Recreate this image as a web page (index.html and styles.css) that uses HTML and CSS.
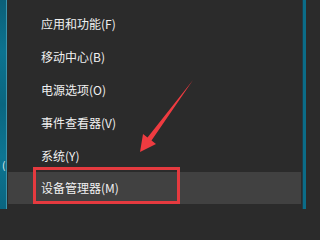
FILE: index.html
```html
<!DOCTYPE html>
<html lang="zh-CN">
<head>
<meta charset="utf-8">
<link rel="stylesheet" href="styles.css">
</head>
<body>
<div class="screen">
  <div class="desk-left"><span class="paren">(</span></div>
  <div class="menu">
    <div class="item">应用和功能(F)</div>
    <div class="item">移动中心(B)</div>
    <div class="item">电源选项(O)</div>
    <div class="item">事件查看器(V)</div>
    <div class="item">系统(Y)</div>
    <div class="item active">设备管理器(M)</div>
  </div>
  <div class="desk-right"></div>
  <div class="mark-box"></div>
  <svg class="arrow" width="306" height="209" viewBox="0 0 306 209">
    <polygon points="140,152 156,144 151.5,140.6 193,80 147.5,137.6 143,134" fill="#ee3b40"/>
  </svg>
</div>
</body>
</html>
```

FILE: styles.css
```css
html, body {
  margin: 0;
  padding: 0;
  background: #2b2b2b;
}
.screen {
  position: relative;
  width: 306px;
  height: 209px;
  display: flex;
  overflow: hidden;
  font-family: "Noto Sans CJK SC", "Noto Sans", sans-serif;
}
.desk-left {
  width: 7px;
  border-right: 1px solid #3d94ad;
  background: linear-gradient(180deg, #0b5f78 0%, #0c7390 25%, #0a6680 50%, #0d7592 75%, #0a6580 100%);
  display: flex;
  flex-direction: column;
  justify-content: flex-end;
  padding-bottom: 38px;
  box-sizing: border-box;
}
.paren {
  color: #e8f2f5;
  font-size: 10px;
  line-height: 12px;
  padding-left: 2px;
}
.menu {
  flex: 1;
  background: #2b2b2b;
  padding-top: 7px;
  padding-left: 1px;
  padding-right: 1px;
  box-sizing: border-box;
}
.item {
  height: 33px;
  line-height: 33px;
  padding-left: 33px;
  color: #f0f0f0;
  font-size: 12px;
  white-space: nowrap;
}
.item.active {
  background: #414141;
  height: 32px;
  line-height: 32px;
}
.desk-right {
  width: 4px;
  background: #0b6c88;
  border-left: 1px solid #1e3c48;
  box-sizing: border-box;
}
.mark-box {
  position: absolute;
  left: 33px;
  top: 167px;
  width: 147px;
  height: 37px;
  border: 3px solid #e53a3f;
  box-sizing: border-box;
}
.arrow {
  position: absolute;
  left: 0;
  top: 0;
}
```
